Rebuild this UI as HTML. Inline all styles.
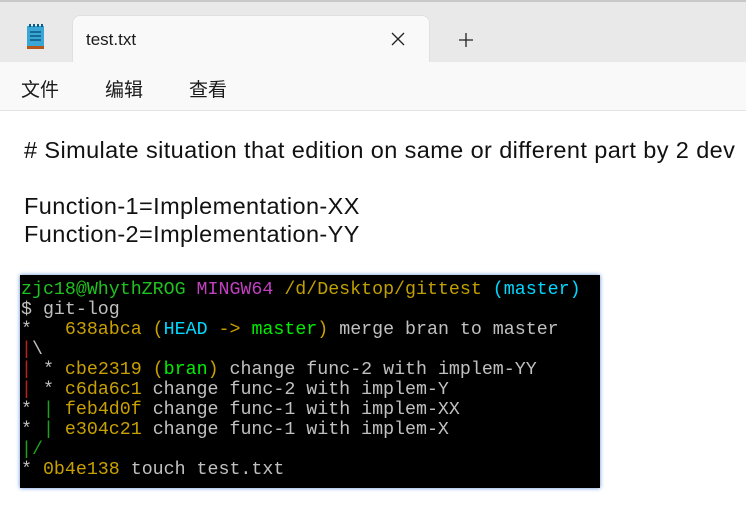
<!DOCTYPE html>
<html><head><meta charset="utf-8"><style>
*{margin:0;padding:0;box-sizing:border-box}
body{width:746px;height:510px;overflow:hidden;background:#fff;font-family:"Liberation Sans","Noto Sans CJK SC",sans-serif;position:relative}
.top{position:absolute;left:0;top:0;width:746px;height:62px;background:#e9e9e9;border-top:2px solid #c8c8c8}
.tab{position:absolute;left:72px;top:15px;width:358px;height:48px;background:#f9f9f9;border-radius:8px 8px 0 0;border:1px solid #e0e0e0;border-bottom:none}
.tab span{position:absolute;left:13px;top:14px;font-size:17px;color:#1a1a1a}
.menu{position:absolute;left:0;top:62px;width:746px;height:49px;background:#f9f9f9;border-bottom:1px solid #e3e3e3}
.menu span{position:absolute;top:13px;font-size:19px;color:#1a1a1a}
.txt{position:absolute;left:24px;font-size:23.5px;letter-spacing:0.4px;color:#111;white-space:pre}
.term{position:absolute;left:20px;top:275px;width:580px;height:213px;background:#000;box-shadow:0 0 4px #5a8fd8;padding:5px 0 0 1px;font-family:"Liberation Mono",monospace;font-size:18.3px;line-height:20px;color:#c0c0c0;white-space:pre}
.g{color:#1fc21f}.m{color:#c040c0}.y{color:#c0a000}.c{color:#00d8ff}.b{color:#00ee00}.r{color:#c02020}.gr{color:#20a020}.yy{color:#c8a000}
</style></head><body>
<div class="top"></div>
<svg style="position:absolute;left:26px;top:24px" width="20" height="27" viewBox="0 0 20 27"><rect x="1" y="2" width="17" height="21" fill="#3aa6d6"/><rect x="1" y="22" width="17" height="3" fill="#b5561a"/><g stroke="#0d5c86" stroke-width="1.6"><line x1="4" y1="8" x2="15" y2="8"/><line x1="4" y1="12" x2="15" y2="12"/><line x1="4" y1="16" x2="15" y2="16"/></g><g fill="#0d5c86"><rect x="3" y="0" width="2" height="3"/><rect x="7" y="0" width="2" height="3"/><rect x="11" y="0" width="2" height="3"/><rect x="15" y="0" width="2" height="3"/></g></svg>
<div class="tab"><span>test.txt</span>
<svg style="position:absolute;left:318px;top:16px" width="14" height="14"><path d="M1 1L13 13M13 1L1 13" stroke="#222" stroke-width="1.3"/></svg></div>
<svg style="position:absolute;left:458px;top:32px" width="16" height="16"><path d="M8 1V15M1 8H15" stroke="#222" stroke-width="1.3"/></svg>
<div class="menu"><span style="left:21px">文件</span><span style="left:105px">编辑</span><span style="left:189px">查看</span></div>
<div class="txt" style="top:137px"># Simulate situation that edition on same or different part by 2 dev</div>
<div class="txt" style="top:193px">Function-1=Implementation-XX</div>
<div class="txt" style="top:221px">Function-2=Implementation-YY</div>
<div class="term"><span class="g">zjc18@WhythZROG</span> <span class="m">MINGW64</span> <span class="y">/d/Desktop/gittest</span> <span class="c">(master)</span>
$ git-log
*   <span class="yy">638abca</span> <span class="yy">(</span><span class="c">HEAD</span><span class="yy"> -&gt; </span><span class="b">master</span><span class="yy">)</span> merge bran to master
<span class="r">|</span>\
<span class="r">|</span> * <span class="yy">cbe2319</span> <span class="yy">(</span><span class="b">bran</span><span class="yy">)</span> change func-2 with implem-YY
<span class="r">|</span> * <span class="yy">c6da6c1</span> change func-2 with implem-Y
* <span class="gr">|</span> <span class="yy">feb4d0f</span> change func-1 with implem-XX
* <span class="gr">|</span> <span class="yy">e304c21</span> change func-1 with implem-X
<span class="gr">|/</span>
* <span class="yy">0b4e138</span> touch test.txt</div>
</body></html>
